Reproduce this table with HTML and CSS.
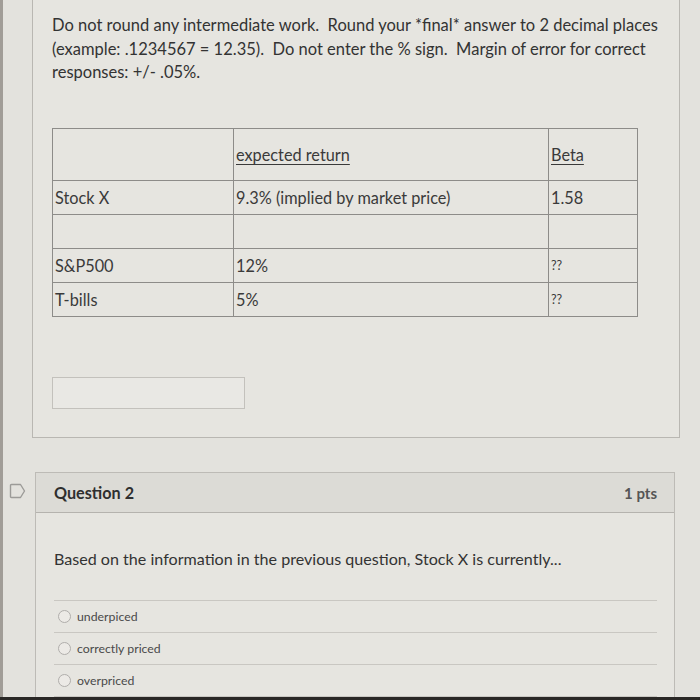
FILE: index.html
```html
<!DOCTYPE html>
<html>
<head>
<meta charset="utf-8">
<link rel="stylesheet" href="styles.css">
</head>
<body>
<div class="screen">
  <div class="edge"></div>
  <div class="content">
    <div class="q1">
      <p class="intro">Do not round any intermediate work.&nbsp; Round your *final* answer to 2 decimal places (example: .1234567 = 12.35).&nbsp; Do not enter the % sign.&nbsp; Margin of error for correct responses: +/- .05%.</p>
      <table class="data">
        <tr class="head">
          <td class="c1"></td>
          <td class="c2"><span class="u">expected return</span></td>
          <td class="c3"><span class="u">Beta</span></td>
        </tr>
        <tr>
          <td>Stock X</td>
          <td>9.3% (implied by market price)</td>
          <td>1.58</td>
        </tr>
        <tr>
          <td></td><td></td><td></td>
        </tr>
        <tr>
          <td>S&amp;P500</td>
          <td>12%</td>
          <td class="small">??</td>
        </tr>
        <tr>
          <td>T-bills</td>
          <td>5%</td>
          <td class="small">??</td>
        </tr>
      </table>
      <div class="answer"></div>
    </div>

    <div class="q2wrap">
      <svg class="flag" width="18" height="16" viewBox="0 0 18 16">
        <path d="M2.5 1.5 H11.5 L15.5 8 L11.5 14.5 H2.5 Q1.5 14.5 1.5 13.5 V2.5 Q1.5 1.5 2.5 1.5 Z" fill="none" stroke="#9c9b98" stroke-width="1.4" stroke-linejoin="round"/>
      </svg>
      <div class="q2">
        <div class="q2head">
          <span class="qtitle">Question 2</span>
          <span class="pts">1 pts</span>
        </div>
        <div class="q2body">
          <p class="qtext">Based on the information in the previous question, Stock X is currently...</p>
          <div class="opts">
            <div class="opt"><span class="radio"></span><span>underpiced</span></div>
            <div class="opt"><span class="radio"></span><span>correctly priced</span></div>
            <div class="opt"><span class="radio"></span><span>overpriced</span></div>
          </div>
        </div>
      </div>
    </div>
  </div>
</div>
<div class="bottom"></div>
</body>
</html>
```

FILE: styles.css
```css
html, body {
  margin: 0;
  padding: 0;
}
body {
  width: 700px;
  height: 700px;
  overflow: hidden;
  background: #e3e2dd;
  font-family: Lato, "Open Sans", sans-serif;
  color: #363636;
  position: relative;
}
.screen {
  display: flex;
  height: 697px;
}
.edge {
  width: 3px;
  background: #a19d97;
  flex: none;
}
.content {
  flex: 1;
  display: flex;
  flex-direction: column;
}
.q1 {
  margin-left: 29px;
  width: 648px;
  border: 1px solid #b9b7b2;
  border-top: none;
  background: #e6e5e0;
  padding: 14px 0 0 19px;
  box-sizing: border-box;
  height: 438px;
  flex: none;
}
.intro {
  margin: 0;
  font-size: 16.5px;
  line-height: 23.5px;
  width: 620px;
  color: #333;
}
.data {
  border-collapse: collapse;
  margin-top: 43px;
  font-size: 16.3px;
  color: #3a3a3a;
}
.data td {
  border: 1px solid #8d8c89;
  height: 33px;
  padding: 0 0 0 2px;
  vertical-align: middle;
}
.data tr.head td {
  height: 51px;
}
.data .c1 { width: 178px; }
.data .c2 { width: 312px; }
.data .c3 { width: 86px; }
.u {
  text-decoration: underline;
  text-underline-offset: 3px;
}
.data td.small {
  font-size: 12.5px;
}
.answer {
  margin-top: 60px;
  width: 193px;
  height: 32px;
  border: 1px solid #c3c1bc;
  box-sizing: border-box;
  background: #e9e8e4;
}
.q2wrap {
  display: flex;
  align-items: flex-start;
  margin-top: 34px;
  flex: none;
}
.flag {
  margin: 11px 0 0 6px;
  flex: none;
}
.q2 {
  margin-left: 8px;
  width: 638px;
  border: 1px solid #bdbbb6;
  border-bottom: none;
  background: #e6e5e0;
  height: 230px;
}
.q2head {
  height: 39px;
  background: #dcdbd6;
  border-bottom: 1px solid #b5b3ae;
  display: flex;
  align-items: center;
  justify-content: space-between;
  padding: 0 17px 0 18px;
}
.qtitle {
  font-weight: bold;
  font-size: 16.2px;
  color: #2f2f2f;
}
.pts {
  font-size: 15px;
  font-weight: bold;
  color: #555;
}
.q2body {
  padding: 35px 17px 0 18px;
}
.qtext {
  margin: 0;
  font-size: 16.1px;
  line-height: 22px;
  color: #333;
}
.opts {
  margin-top: 30px;
  border-top: 1px solid #c9c7c2;
}
.opt {
  height: 31px;
  display: flex;
  align-items: center;
  border-bottom: 1px solid #c9c7c2;
  font-size: 12.3px;
  color: #4a4a4a;
  padding-left: 4px;
  gap: 6px;
}
.radio {
  width: 11px;
  height: 11px;
  border-radius: 50%;
  border: 1px solid #b0aeab;
  background: #eceae6;
}
.bottom {
  position: absolute;
  left: 0;
  right: 0;
  bottom: 0;
  height: 3px;
  background: #2a2826;
}
```
